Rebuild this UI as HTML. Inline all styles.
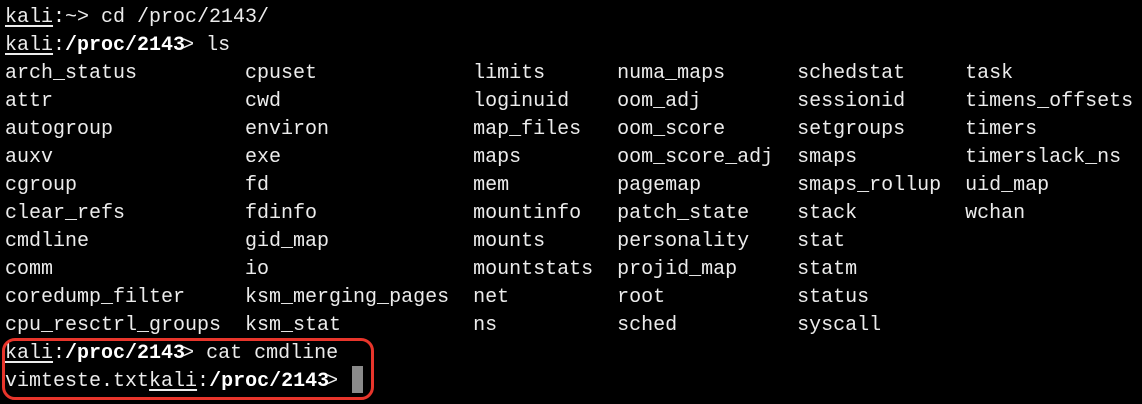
<!DOCTYPE html>
<html><head><meta charset="utf-8"><style>
html,body{margin:0;padding:0;background:#000;width:1142px;height:404px;overflow:hidden}
pre{margin:0;position:absolute;left:5px;top:4px;font-family:"Liberation Mono",monospace;font-size:20px;line-height:28px;color:#ececec}
u{text-decoration:underline;text-underline-offset:3px}
b{font-weight:bold;color:#fff}
.gt{margin-left:-3px}
.box{position:absolute;left:2px;top:338px;width:366px;height:56px;border:3px solid #e8352b;border-radius:13px}
.cur{position:absolute;left:352px;top:366px;width:11px;height:27px;background:#8a8a8a}
</style></head><body>
<pre><u>kali</u>:~&gt; cd /proc/2143/
<u>kali</u>:<b>/proc/2143</b><span class="gt">&gt;</span> ls
arch_status         cpuset             limits      numa_maps      schedstat     task
attr                cwd                loginuid    oom_adj        sessionid     timens_offsets
autogroup           environ            map_files   oom_score      setgroups     timers
auxv                exe                maps        oom_score_adj  smaps         timerslack_ns
cgroup              fd                 mem         pagemap        smaps_rollup  uid_map
clear_refs          fdinfo             mountinfo   patch_state    stack         wchan
cmdline             gid_map            mounts      personality    stat
comm                io                 mountstats  projid_map     statm
coredump_filter     ksm_merging_pages  net         root           status
cpu_resctrl_groups  ksm_stat           ns          sched          syscall
<u>kali</u>:<b>/proc/2143</b><span class="gt">&gt;</span> cat cmdline
vimteste.txt<u>kali</u>:<b>/proc/2143</b><span class="gt">&gt;</span></pre>
<div class="cur"></div>
<div class="box"></div>
</body></html>
